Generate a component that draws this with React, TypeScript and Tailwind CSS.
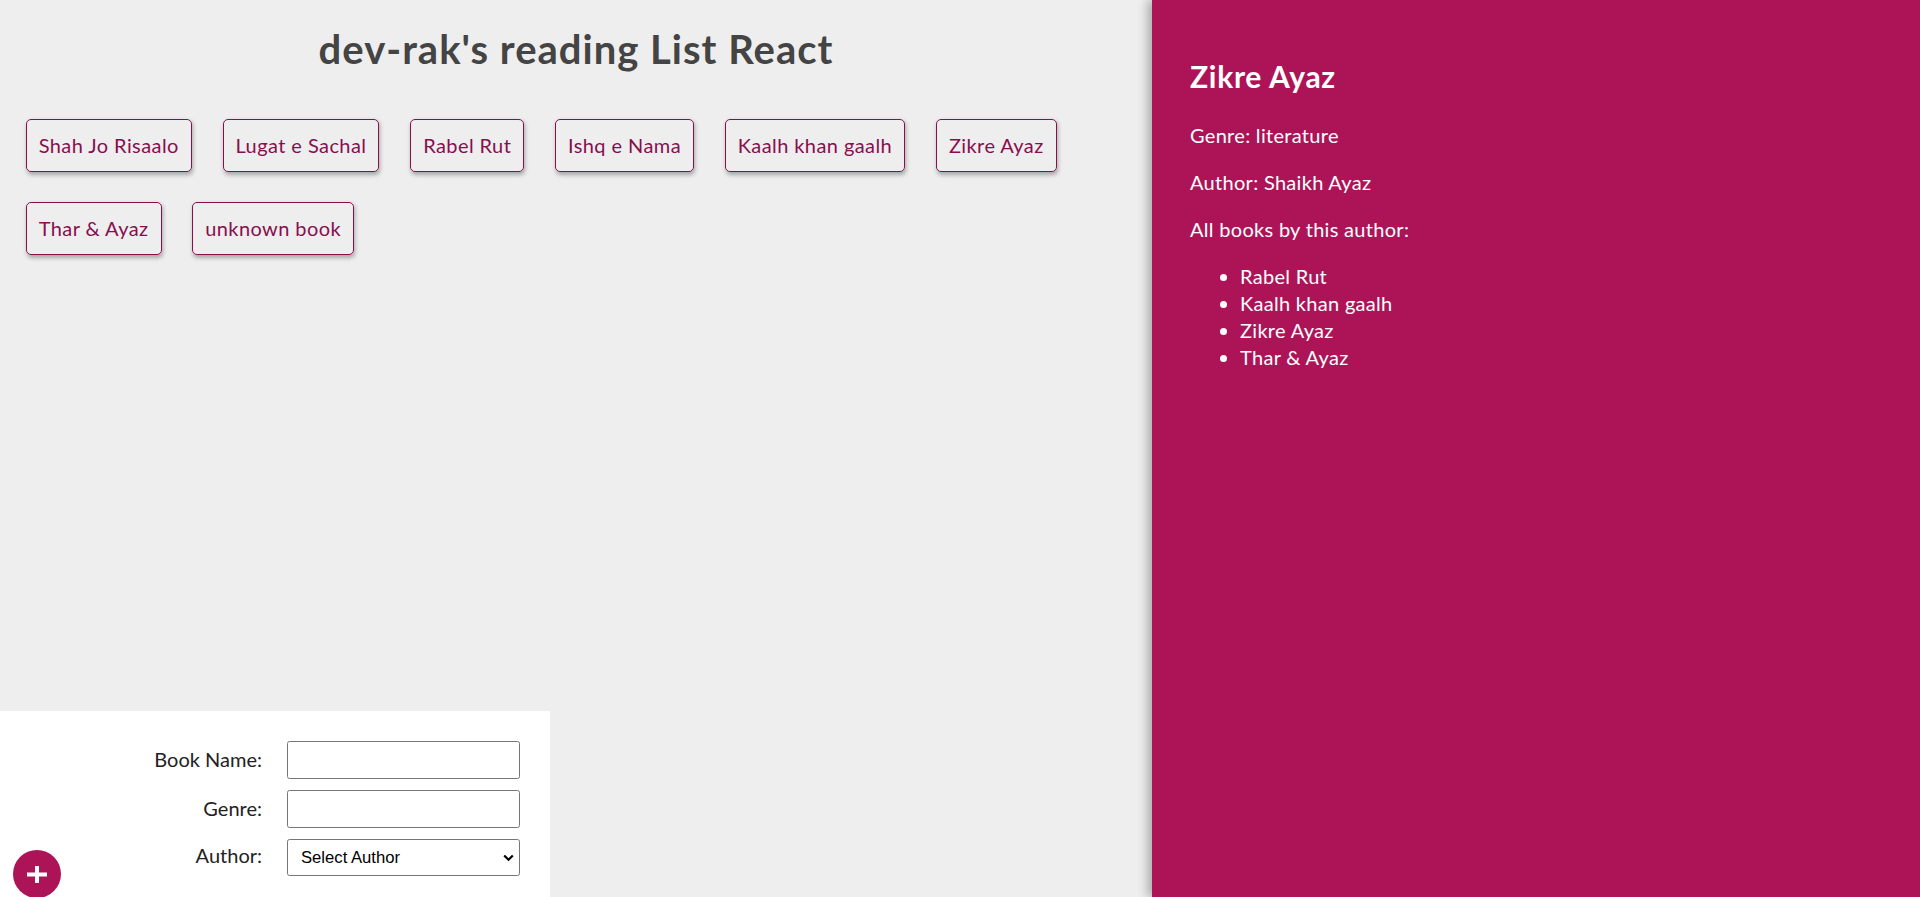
const books = [
  "Shah Jo Risaalo",
  "Lugat e Sachal",
  "Rabel Rut",
  "Ishq e Nama",
  "Kaalh khan gaalh",
  "Zikre Ayaz",
  "Thar & Ayaz",
  "unknown book",
];

const byAuthor = ["Rabel Rut", "Kaalh khan gaalh", "Zikre Ayaz", "Thar & Ayaz"];

const BookList = () => (
  <ul className="flex flex-wrap gap-x-[30.7px] gap-y-[30px] pl-[25.7px] pr-[40px] mt-[46px]">
    {books.map((b) => (
      <li
        key={b}
        className="border border-[#880E4F] rounded-[5px] px-[12px] py-[12px] text-[20px] leading-[27px] tracking-[0.42px] text-[#880E4F] shadow-[1px_2.5px_4px_rgba(0,0,0,0.3)] cursor-pointer"
      >
        {b}
      </li>
    ))}
  </ul>
);

const AddBook = () => (
  <form className="relative mt-auto w-[550px] h-[186px] bg-white pt-[30px] font-['Lato',sans-serif]">
    <div className="flex flex-col gap-[11px]">
      <div className="flex items-start h-[38px]">
        <label className="w-[262px] text-right text-[20px] leading-[24px] pt-[6px] text-[#222]">Book Name:</label>
        <input className="ml-[25px] w-[233px] h-[38px] border border-[#767676] rounded-[2.5px] bg-white" />
      </div>
      <div className="flex items-start h-[38px]">
        <label className="w-[262px] text-right text-[20px] leading-[24px] pt-[6px] text-[#222]">Genre:</label>
        <input className="ml-[25px] w-[233px] h-[38px] border border-[#767676] rounded-[2.5px] bg-white" />
      </div>
      <div className="flex items-start h-[37px]">
        <label className="w-[262px] text-right text-[20px] leading-[24px] pt-[4px] text-[#222]">Author:</label>
        <div className="relative ml-[25px] w-[233px] h-[37px]">
          <select className="appearance-none w-full h-full border border-[#767676] rounded-[2.5px] bg-white pl-[13px] text-[16.67px] font-['Liberation_Sans',sans-serif] text-black">
            <option>Select Author</option>
          </select>
          <svg
            className="absolute right-[6px] top-[15px] pointer-events-none"
            width="11"
            height="8"
            viewBox="0 0 11 8"
          >
            <path d="M1.2 1.5 L5.5 5.8 L9.8 1.5" stroke="#000" strokeWidth="2.2" fill="none" />
          </svg>
        </div>
      </div>
    </div>
    <button
      type="button"
      className="absolute left-[13px] bottom-[-1px] w-[48px] h-[48px] rounded-full bg-[#AD1457] flex items-center justify-center"
    >
      <svg width="20" height="17" viewBox="0 0 20 17">
        <rect x="0" y="6.5" width="20" height="4" fill="#fff" />
        <rect x="8" y="0" width="4" height="17" fill="#fff" />
      </svg>
    </button>
  </form>
);

const BookDetails = () => (
  <div className="w-[768px] h-full bg-[#AD1457] text-white pl-[38px] pt-[58px] shadow-[-4px_0_10px_rgba(0,0,0,0.3)] z-10">
    <h2 className="text-[30px] leading-[36px] font-bold tracking-[0.7px]">Zikre Ayaz</h2>
    <div className="text-[20px] leading-[27px] tracking-[0.3px]">
      <p className="mt-[28px]">Genre: literature</p>
      <p className="mt-[20px]">Author: Shaikh Ayaz</p>
      <p className="mt-[20px]">All books by this author:</p>
      <ul className="list-disc pl-[50px] mt-[20px]">
        {byAuthor.map((b) => (
          <li key={b}>{b}</li>
        ))}
      </ul>
    </div>
  </div>
);

export default function App() {
  return (
    <div className="flex w-[1920px] h-[897px] overflow-hidden font-['Lato',sans-serif]">
      <div className="w-[1152px] h-full bg-[#eeeeee] flex flex-col">
        <h1 className="mt-[24.5px] text-center text-[40px] leading-[48px] font-bold tracking-[1px] text-[#444]">
          dev-rak's reading List React
        </h1>
        <BookList />
        <AddBook />
      </div>
      <BookDetails />
    </div>
  );
}
